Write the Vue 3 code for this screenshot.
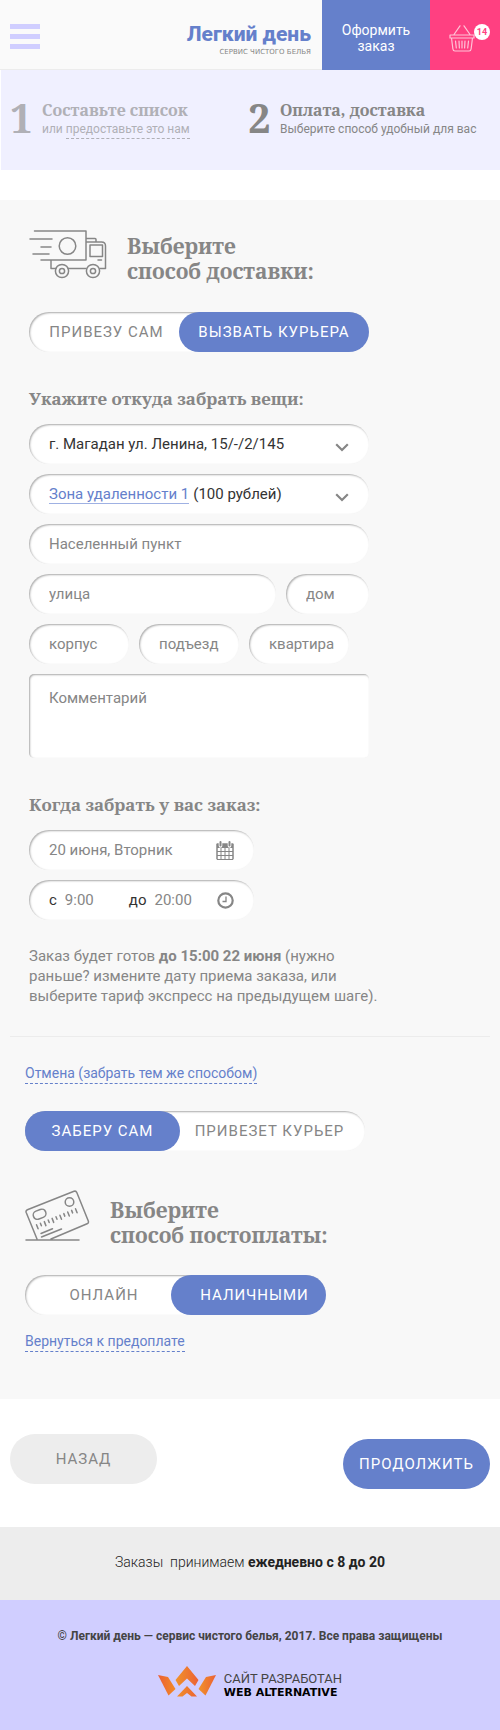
<script setup>
import { ref } from 'vue'

const delivery = ref('courier')
const pickup = ref('self')
const payment = ref('cash')
const address = ref('г. Магадан ул. Ленина, 15/-/2/145')
const zonePrice = ref('(100 рублей)')
const day = ref('20 июня, Вторник')
const from = ref('9:00')
const till = ref('20:00')
const cells = [0, 1, 2, 3, 4]
const ticks = [0, 1, 2, 3, 4, 5, 6, 7, 8, 9, 10]
</script>

<template>
  <div class="page">
    <header class="top">
      <button class="burger" type="button" aria-label="Меню"><i></i><i></i><i></i></button>
      <a class="brand" href="#">
        <span class="brand-name">Легкий день</span>
        <span class="brand-sub">СЕРВИС ЧИСТОГО БЕЛЬЯ</span>
      </a>
      <a class="checkout" href="#">Оформить<br />заказ</a>
      <a class="cart" href="#" aria-label="Корзина">
        <svg width="26" height="27" viewBox="0 0 26 27" fill="none" stroke="#ffc3d7" stroke-width="1.2" stroke-linecap="round" stroke-linejoin="round">
          <path d="M5 9.500L11 .8M21 9.500L15 .8M1 10h24v3H1zM2.500 13l1.400 11q.3 2 2 2h14.200q1.700 0 2-2L23.500 13M6.500 16l.8 7M10 16l.4 7M13 16v7M16 16l-.4 7M19.500 16l-.8 7" />
        </svg>
        <span class="badge">14</span>
      </a>
    </header>

    <nav class="steps">
      <div class="step done">
        <span class="num">1</span>
        <div>
          <h2>Составьте список</h2>
          <p>или <a href="#">предоставьте это нам</a></p>
        </div>
      </div>
      <div class="step">
        <span class="num">2</span>
        <div>
          <h2>Оплата, доставка</h2>
          <p>Выберите способ удобный для вас</p>
        </div>
      </div>
    </nav>

    <main>
      <section class="block">
        <div class="title">
          <svg class="truck" width="78" height="49" viewBox="0 0 78 49" fill="none" stroke="#868686" stroke-width="1.500" stroke-linecap="round" stroke-linejoin="round">
            <path d="M5.500 1H57v29H12M1 9h22M12 17h10M4 24h16M22 30v8.500h5M39 38.500h18M71 38.500h5.500V16q0-4-4-4H57M57 8.500h9q1 0 1 1V12" />
            <path d="M61 15h12.500v11.500H61zM69 30h3.500" />
            <circle cx="38.500" cy="16" r="8.300" />
            <circle cx="33" cy="41" r="6.600" /><circle cx="33" cy="41" r="2.600" />
            <circle cx="64" cy="41" r="6.600" /><circle cx="64" cy="41" r="2.600" />
          </svg>
          <h1>Выберите<br />способ доставки:</h1>
        </div>
        <div class="toggle t1" role="radiogroup" aria-label="Способ доставки">
          <label :class="{ on: delivery === 'self' }"><input v-model="delivery" type="radio" name="delivery" value="self" />ПРИВЕЗУ САМ</label>
          <label :class="{ on: delivery === 'courier' }"><input v-model="delivery" type="radio" name="delivery" value="courier" />ВЫЗВАТЬ КУРЬЕРА</label>
        </div>

        <h3>Укажите откуда забрать вещи:</h3>
        <div class="fields">
          <div class="field pick">
            <select v-model="address" aria-label="Адрес">
              <option>г. Магадан ул. Ленина, 15/-/2/145</option>
            </select>
            <svg class="chev" width="14" height="9" viewBox="0 0 14 9" fill="none" stroke="#868686" stroke-width="2.200"><path d="M1.200 1.200L7 7l5.800-5.800" /></svg>
          </div>
          <div class="field pick">
            <a href="#">Зона удаленности 1</a>
            <select v-model="zonePrice" aria-label="Стоимость зоны">
              <option>(100 рублей)</option>
            </select>
            <svg class="chev" width="14" height="9" viewBox="0 0 14 9" fill="none" stroke="#868686" stroke-width="2.200"><path d="M1.200 1.200L7 7l5.800-5.800" /></svg>
          </div>
          <input class="field" type="text" placeholder="Населенный пункт" aria-label="Населенный пункт" />
          <div class="row street">
            <input class="field" type="text" placeholder="улица" aria-label="Улица" />
            <input class="field" type="text" placeholder="дом" aria-label="Дом" />
          </div>
          <div class="row flat">
            <input class="field" type="text" placeholder="корпус" aria-label="Корпус" />
            <input class="field" type="text" placeholder="подъезд" aria-label="Подъезд" />
            <input class="field" type="text" placeholder="квартира" aria-label="Квартира" />
          </div>
          <textarea class="field" placeholder="Комментарий" aria-label="Комментарий"></textarea>
        </div>

        <h3>Когда забрать у вас заказ:</h3>
        <div class="fields when">
          <div class="field pick">
            <input v-model="day" type="text" aria-label="Дата" />
            <svg width="18" height="19" viewBox="0 0 18 19">
              <path d="M1 3h16v15.500H1z" fill="#fff" stroke="#868686" />
              <path d="M.5 2.500h17v4.500H.5z" fill="#868686" />
              <path v-for="c in cells" :key="c" :d="`M${1 + c * 4} 7v11`" stroke="#868686" />
              <path d="M1 10.500h16M1 14.500h16M1 18.500h16" stroke="#868686" />
              <path d="M4.500 1v4M13.500 1v4" stroke="#fff" stroke-width="3.600" stroke-linecap="round" />
              <path d="M4.500 1v3.500M13.500 1v3.500" stroke="#868686" stroke-width="2" stroke-linecap="round" />
            </svg>
          </div>
          <div class="field pick">
            <label for="from">с</label><input id="from" v-model="from" class="from" type="text" />
            <label for="till">до</label><input id="till" v-model="till" class="till" type="text" />
            <svg width="17" height="17" viewBox="0 0 17 17" fill="none" stroke="#868686"><circle cx="8.500" cy="8.500" r="7.200" stroke-width="2.200" /><path d="M9 4.500v5H5.500" stroke-width="1.300" /></svg>
          </div>
        </div>
        <p class="note">Заказ будет готов <b>до 15:00 22 июня</b> (нужно раньше? измените дату приема заказа, или выберите тариф экспресс на предыдущем шаге).</p>
      </section>

      <hr />

      <section class="block second">
        <a class="dashed cancel" href="#">Отмена (забрать тем же способом)</a>
        <div class="toggle t2" role="radiogroup" aria-label="Способ получения">
          <label :class="{ on: pickup === 'self' }"><input v-model="pickup" type="radio" name="pickup" value="self" />ЗАБЕРУ САМ</label>
          <label :class="{ on: pickup === 'courier' }"><input v-model="pickup" type="radio" name="pickup" value="courier" />ПРИВЕЗЕТ КУРЬЕР</label>
        </div>

        <div class="title pay">
          <svg class="card" width="65" height="51" viewBox="0 0 65 51" fill="none" stroke="#868686" stroke-width="1.500" stroke-linecap="round" stroke-linejoin="round">
            <path d="M1 50h53M12 49L1.200 22.500q-.7-2 1.200-2.800L49 1.300q2-.7 2.800 1.200L63.300 31q.7 2-1.200 2.800L26 49" />
            <rect x="8" y="20" width="13" height="8.500" rx="4.200" transform="rotate(-21 14.500 24)" />
            <circle cx="44.500" cy="12" r="4.300" />
            <path v-for="t in ticks" :key="t" :d="`M${11.500 + t * 3.900} ${34.800 - t * 1.600}l${t % 2 ? 1 : 1.600} ${t % 2 ? 2.500 : 4}`" />
            <path d="M16 43.500l11.500-4.700M16.500 47L36.500 39" />
          </svg>
          <h1>Выберите<br />способ постоплаты:</h1>
        </div>
        <div class="toggle t3" role="radiogroup" aria-label="Способ постоплаты">
          <label :class="{ on: payment === 'online' }"><input v-model="payment" type="radio" name="payment" value="online" />ОНЛАЙН</label>
          <label :class="{ on: payment === 'cash' }"><input v-model="payment" type="radio" name="payment" value="cash" />НАЛИЧНЫМИ</label>
        </div>
        <a class="dashed back-pre" href="#">Вернуться к предоплате</a>
      </section>
    </main>

    <div class="actions">
      <button class="prev" type="button">НАЗАД</button>
      <button class="next" type="button">ПРОДОЛЖИТЬ</button>
    </div>

    <div class="hours">Заказы&nbsp; принимаем <b>ежедневно с 8 до 20</b></div>
    <footer>
      <p>© Легкий день — сервис чистого белья, 2017. Все права защищены</p>
      <a class="dev" href="#">
        <svg width="58" height="31" viewBox="0 0 58 31">
          <defs>
            <linearGradient id="flame" x1="0" y1="0" x2="1" y2="0"><stop offset="0" stop-color="#f0932b" /><stop offset="1" stop-color="#ec6134" /></linearGradient>
            <linearGradient id="flameBack" x1="0" y1="0" x2="1" y2="0"><stop offset="0" stop-color="#ec5f35" /><stop offset="1" stop-color="#f18b26" /></linearGradient>
          </defs>
          <path d="M0 9l10 2 7.500 12-7 6.500z" fill="url(#flameBack)" />
          <path d="M58 9l-10 2-7.500 12 7 6.500z" fill="url(#flame)" />
          <path d="M29 0l11.500 14-3.500 6-8-7.500-8 7.500-3.500-6zM29 20l10 10.500h-5.500L29 27l-4.500 3.500H19z" fill="url(#flame)" />
        </svg>
        <span><span class="made">САЙТ РАЗРАБОТАН</span><span class="studio">WEB ALTERNATIVE</span></span>
      </a>
    </footer>
  </div>
</template>

<style>
body { margin: 0; background: #fff; }
</style>

<style scoped>
* { box-sizing: border-box; }
.page { font-family: Roboto, "Liberation Sans", sans-serif; font-size: 15px; line-height: 20px; color: #868686; }
h1, h2, h3, p { margin: 0; }
a { text-decoration: none; }
input, select, textarea, button { font: inherit; color: inherit; border: 0; background: none; margin: 0; padding: 0; }

.top { display: flex; height: 70px; background: #fafafa; border-bottom: 1px solid #ececec; }
.burger { display: flex; flex-direction: column; gap: 5px; width: 30px; margin: 24px auto 0 10px; }
.burger i { height: 5px; background: #d0ceff; }
.brand { display: flex; flex-direction: column; align-items: flex-end; padding: 20px 11px 0 0; }
.brand-name { font: 800 21px/28px Roboto, sans-serif; color: #6580cb; white-space: nowrap; }
.brand-sub { font: 7px/8px "DejaVu Sans", sans-serif; color: #868686; white-space: nowrap; }
.checkout { width: 108px; height: 70px; padding-top: 22px; background: #6580cb; color: #fff; text-align: center; font-size: 14px; line-height: 16px; }
.cart { position: relative; width: 70px; height: 70px; padding: 25px 0 0 19px; background: #ff4081; }
.badge { position: absolute; top: 24px; right: 10px; width: 16px; height: 16px; border-radius: 8px; background: #fff; color: #ff4081; font-size: 9px; font-weight: bold; line-height: 16px; text-align: center; }

.steps { display: grid; grid-template-columns: 238fr 242fr; height: 100px; margin-left: 1px; padding: 30px 10px 0 9px; background: #f0f0ff; }
.step { display: flex; gap: 8px; white-space: nowrap; }
.step.done { opacity: .6; }
.num { width: 24px; font: bold 40px/36px "Noto Serif", "DejaVu Serif Condensed", serif; }
.step h2 { font: bold 16px/20px "Noto Serif", "DejaVu Serif Condensed", serif; }
.step p { font-size: 12px; line-height: 18px; }
.step p a { display: inline-block; color: inherit; border-bottom: 1px dashed; }

main { margin-top: 30px; padding: 30px 10px 47px; background: #f8f8f8; }
.block { padding-left: 19px; }
.second { padding-left: 15px; }
.title { display: flex; align-items: flex-start; gap: 20px; }
.title svg { flex: none; }
.title h1 { margin-top: 4px; font: bold 21px/25px "Noto Serif", "DejaVu Serif Condensed", serif; }
h3 { margin: 37px 0 15px; font: bold 17px/20px "Noto Serif", "DejaVu Serif Condensed", serif; }

.toggle { display: grid; width: 100%; max-width: 340px; height: 40px; border-radius: 20px; background: #fff; box-shadow: inset 1px 1px 2px #aaa; line-height: 40px; letter-spacing: 1px; text-align: center; white-space: nowrap; }
.toggle label { position: relative; border-radius: 20px; cursor: pointer; }
.toggle .on { background: #6580cb; color: #fff; }
.toggle input { position: absolute; opacity: 0; }
.t1 { grid-template-columns: 150fr 190fr; margin-top: 28px; }
.t1 label:first-child { padding-left: 5px; }
.t2 { grid-template-columns: 155fr 185fr; margin-top: 27px; }
.t2 label:last-child { padding-right: 6px; }
.t3 { grid-template-columns: 146fr 155fr; max-width: 301px; margin-top: 27px; }
.t3 label { padding-left: 12px; }

.fields { display: grid; gap: 10px; width: 100%; max-width: 340px; }
.when { max-width: 225px; }
.field { width: 100%; min-width: 0; height: 40px; padding: 0 20px; border-radius: 20px; background: #fff; box-shadow: inset 1px 1px 2px #aaa; }
.field::placeholder { color: #868686; opacity: 1; }
.row { display: grid; gap: 10px; }
.street { grid-template-columns: 247fr 83fr; }
.flat { grid-template-columns: repeat(3, 1fr); max-width: 320px; }
.flat .field { padding-right: 10px; }
textarea.field { display: block; height: 84px; padding: 14px 20px; border-radius: 5px; resize: none; }
.pick { display: flex; align-items: center; color: #333; }
.pick select { flex: 1; min-width: 0; height: 40px; appearance: none; }
.pick a { margin-right: 4px; color: #6580cb; line-height: 18px; border-bottom: 1px solid #9fb1e3; }
.chev { flex: none; margin-top: 6px; }
.pick input { flex: 1; min-width: 0; color: #868686; }
.pick label { margin-right: 8px; }
.pick .from { flex: none; width: 64px; }

.note { max-width: 355px; margin-top: 26px; }
hr { height: 1px; margin: 30px 0 27px; border: 0; background: #ececec; }
.dashed { display: block; width: fit-content; padding-bottom: 1px; border-bottom: 1px dashed #6580cb; color: #6580cb; font-size: 14px; line-height: 18px; }
.back-pre { margin-top: 17px; }
.pay { margin-top: 39px; }
.pay h1 { margin-top: 8px; }

.actions { display: flex; justify-content: space-between; align-items: flex-start; padding: 35px 10px 38px; }
.actions button { width: 147px; height: 50px; border-radius: 25px; letter-spacing: 1px; cursor: pointer; }
.prev { background: #ededed; }
.actions .next { margin-top: 5px; background: #6580cb; color: #fff; }

.hours { padding: 25px 10px 28px; background: #ededed; color: #222; font-size: 14px; font-weight: 300; text-align: center; }
.hours b { font-weight: 700; }
footer { display: flex; flex-direction: column; align-items: center; gap: 20px; padding: 26px 10px 33px; background: #d0ceff; color: #444; }
footer p { font-size: 12px; font-weight: bold; }
.dev { display: flex; gap: 8px; color: #444; }
.dev > span { display: flex; flex-direction: column; padding-top: 5px; }
.made { font-size: 13px; line-height: 16px; }
.studio { color: #000; font: bold 11px/12px "DejaVu Sans", sans-serif; }
</style>
